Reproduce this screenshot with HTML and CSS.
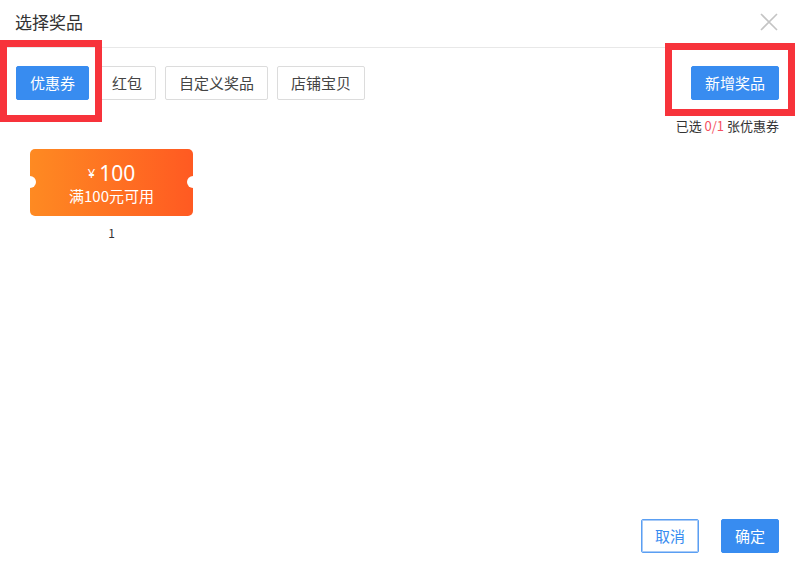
FILE: index.html
```html
<!DOCTYPE html>
<html lang="zh">
<head>
<meta charset="utf-8">
<link rel="stylesheet" href="styles.css">
</head>
<body>
<div class="dialog">
  <header class="header">
    <span class="title">选择奖品</span>
    <svg class="close" width="18" height="18" viewBox="0 0 18 18"><path d="M1 1 L17 17 M17 1 L1 17" stroke="#c4c4c4" stroke-width="1.6" fill="none"/></svg>
  </header>
  <div class="toolbar">
    <div class="tabs">
      <button class="btn btn-primary">优惠券</button>
      <button class="btn">红包</button>
      <button class="btn">自定义奖品</button>
      <button class="btn">店铺宝贝</button>
    </div>
    <div class="side">
      <button class="btn btn-primary">新增奖品</button>
      <div class="count">已选 <span class="red">0/1</span> 张优惠券</div>
    </div>
  </div>
  <div class="list">
    <div class="item">
      <div class="coupon">
        <div class="amount"><span class="yen">¥</span>100</div>
        <div class="cond">满100元可用</div>
      </div>
      <div class="label">1</div>
    </div>
  </div>
  <footer class="footer">
    <button class="btn btn-outline">取消</button>
    <button class="btn btn-primary">确定</button>
  </footer>
  <div class="mark mark-left"></div>
  <div class="mark mark-right"></div>
</div>
</body>
</html>
```
FILE: styles.css
```css
* { box-sizing: border-box; }
html, body { margin: 0; padding: 0; background: #fff; }
body { font-family: "Noto Sans CJK SC", "Liberation Sans", sans-serif; color: #333; }
.dialog { position: relative; width: 795px; height: 561px; display: flex; flex-direction: column; overflow: hidden; }
.header { height: 48px; display: flex; align-items: center; justify-content: space-between; padding: 0 17px 4px 15px; border-bottom: 1px solid #e8e8e8; }
.title { font-size: 17px; color: #333; }
.close { display: block; }
.toolbar { display: flex; justify-content: space-between; align-items: flex-start; padding: 0 16px; margin-top: 18px; }
.tabs { display: flex; gap: 9px; }
.btn { height: 34px; padding: 0 13px; font-size: 15px; font-family: inherit; color: #444; background: #fff; border: 1px solid #dcdcdc; border-radius: 2px; line-height: 32px; cursor: pointer; }
.btn-primary { background: #388cf0; border-color: #388cf0; color: #fff; }
.btn-outline { border: 1px solid #5a9ff3; color: #388cf0; box-shadow: inset 0 0 0 1px #a9cbf7; width: 58px; padding: 0; }
.footer .btn-primary { width: 58px; padding: 0; }
.side { display: flex; flex-direction: column; align-items: flex-end; }
.count { font-size: 13px; line-height: 16px; margin-top: 18px; color: #333; }
.red { color: #f5515f; }
.list { padding: 15px 0 0 30px; display: flex; }
.item { display: flex; flex-direction: column; align-items: center; }
.coupon { position: relative; width: 163px; height: 67px; border-radius: 5px; background: linear-gradient(90deg, #fe8a22 0%, #ff5a22 100%); color: #fff; display: flex; flex-direction: column; align-items: center; justify-content: center; }
.coupon::before, .coupon::after { content: ""; position: absolute; top: 27px; width: 12px; height: 12px; border-radius: 50%; background: #fff; }
.coupon::before { left: -6px; }
.coupon::after { right: -6px; }
.amount { font-size: 21px; line-height: 24px; font-family: "Noto Sans", "Liberation Sans", sans-serif; margin-top: 2px; }
.yen { font-size: 13px; margin-right: 4px; vertical-align: 3px; }
.cond { font-size: 15px; line-height: 20px; margin-top: 1px; }
.label { font-size: 12px; line-height: 16px; margin-top: 9px; color: #333; }
.footer { margin-top: auto; display: flex; justify-content: flex-end; gap: 22px; padding: 0 16px 8px 0; }
.mark { position: absolute; border: 7px solid #f7333b; }
.mark-left { left: 0; top: 40px; width: 102px; height: 82px; }
.mark-right { left: 665px; top: 43px; width: 130px; height: 73px; }
```
